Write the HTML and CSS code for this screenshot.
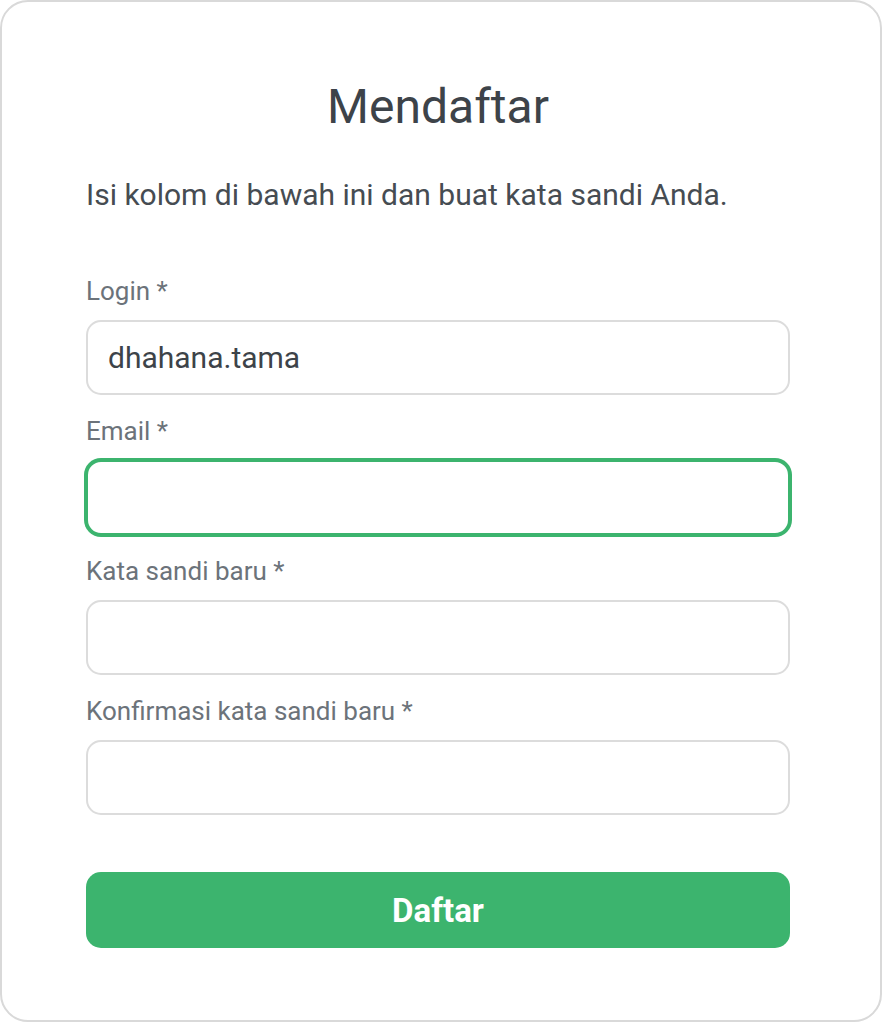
FILE: index.html
```html
<!DOCTYPE html>
<html lang="id">
<head>
  <meta charset="UTF-8">
  <title>Mendaftar</title>
  <link rel="stylesheet" href="styles.css">
</head>
<body>

  <div class="card">
    <h1 class="title">Mendaftar</h1>
    <p class="intro">Isi kolom di bawah ini dan buat kata sandi Anda.</p>

    <form class="form">
      <div class="field">
        <label for="login">Login *</label>
        <input id="login" type="text" value="dhahana.tama">
      </div>

      <div class="field">
        <label for="email">Email *</label>
        <input id="email" class="focused" type="email">
      </div>

      <div class="field">
        <label for="password">Kata sandi baru *</label>
        <input id="password" type="password">
      </div>

      <div class="field">
        <label for="confirm">Konfirmasi kata sandi baru *</label>
        <input id="confirm" type="password">
      </div>

      <button type="button" class="submit">Daftar</button>
    </form>
  </div>

</body>
</html>
```

FILE: styles.css
```css
* {
  box-sizing: border-box;
}

body {
  margin: 0;
  background-color: #ffffff;
  font-family: Roboto, "Liberation Sans", sans-serif;
}

.card {
  width: 882px;
  height: 1022px;
  border: 2px solid #d9d9d9;
  border-radius: 28px;
  padding: 77px 90px 0 84px;
}

.title {
  margin: 0;
  font-size: 48px;
  font-weight: 400;
  line-height: 56px;
  text-align: center;
  color: #3d4349;
}

.intro {
  margin: 42px 0 0;
  font-size: 30px;
  line-height: 36px;
  color: #464c52;
}

.form {
  margin-top: 63px;
  display: flex;
  flex-direction: column;
}

.field {
  display: flex;
  flex-direction: column;
  margin-bottom: 21px;
}

.field label {
  font-size: 26px;
  line-height: 30px;
  color: #6c737a;
  margin-bottom: 14px;
}

.field input {
  height: 75px;
  border: 2px solid #dcdcdc;
  border-radius: 15px;
  padding: 0 20px;
  font-family: inherit;
  font-size: 30px;
  color: #3d4349;
  outline: none;
}

/* focus ring, drawn as in the active state */
.field input.focused {
  border-color: #3cb46e;
  box-shadow: 0 0 0 2px #3cb46e;
}

.submit {
  margin-top: 36px;
  height: 76px;
  border: none;
  border-radius: 15px;
  background-color: #3cb46e;
  color: #ffffff;
  font-family: inherit;
  font-size: 33px;
  font-weight: 700;
  cursor: pointer;
}
```
